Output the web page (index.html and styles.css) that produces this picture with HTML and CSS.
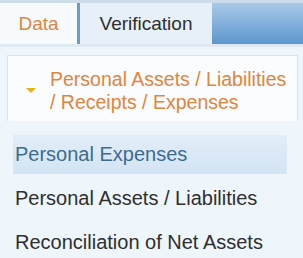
FILE: index.html
```html
<!DOCTYPE html>
<html lang="en">
  <head>
    <meta charset="UTF-8" />
    <meta name="viewport" content="width=device-width, initial-scale=1.0" />
    <title>Personal Assets</title>
    <link rel="stylesheet" href="styles.css">
  </head>
  <body>
    <div class="tabs">
      <div class="tab active">Data</div>
      <div class="tab">Verification</div>
      <div class="tab-fill"></div>
    </div>

    <div class="panel">
      <div class="group-head">
        <span class="caret"></span>
        <span class="group-title">Personal Assets / Liabilities / Receipts / Expenses</span>
      </div>

      <ul class="menu">
        <li class="selected">Personal Expenses</li>
        <li>Personal Assets / Liabilities</li>
        <li>Reconciliation of Net Assets</li>
      </ul>
    </div>
  </body>
</html>
```

FILE: styles.css
```css
body {
  margin: 0;
  font-family: "Liberation Sans", Arial, sans-serif;
  background: #eef5fb;
  color: #333;
  width: 303px;
  height: 258px;
  overflow: hidden;
}

.tabs {
  display: flex;
  height: 41px;
  border-top: 3px solid #cddcea;
  border-bottom: 3px solid #dfe9f3;
  font-size: 19px;
}

.tab {
  display: flex;
  align-items: center;
  justify-content: center;
  width: 132px;
  background: #e7f0f8;
  color: #2e2e2e;
}

.tab.active {
  width: 77px;
  background: #f7fafd;
  color: #e0853f;
  border-right: 3px solid #6a9ccb;
}

.tab-fill {
  flex: 1;
  background: linear-gradient(#a9c9e8, #5d96ce);
}

.panel {
  padding: 8px 5px 0 7px;
}

.group-head {
  display: flex;
  align-items: center;
  height: 61px;
  padding: 4px 0 0 18px;
  background: #fafcfe;
  border: 1px solid #d7e3ee;
  border-bottom: none;
  color: #e2843d;
  font-size: 19.5px;
  line-height: 23px;
}

.caret {
  flex: none;
  width: 0;
  height: 0;
  margin-right: 14px;
  border-left: 5px solid transparent;
  border-right: 5px solid transparent;
  border-top: 5px solid #e6b21c;
}

.menu {
  list-style: none;
  margin: 14px 0 0;
  padding: 0 11px 0 6px;
}

.menu li {
  height: 39px;
  line-height: 39px;
  margin-bottom: 5px;
  padding-left: 2px;
  font-size: 20px;
  color: #2f2f2f;
  white-space: nowrap;
}

.menu li.selected {
  background: linear-gradient(#e2edf8, #d3e4f4);
  color: #3e6b90;
}
```
